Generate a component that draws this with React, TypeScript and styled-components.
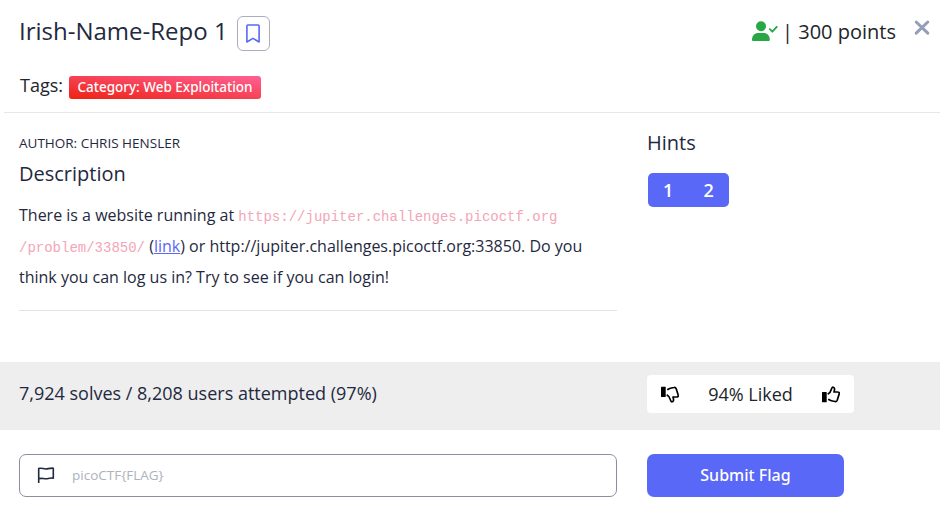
import React from 'react';
import styled, { createGlobalStyle } from 'styled-components';

const GlobalStyle = createGlobalStyle`
  * { box-sizing: border-box; }
  body {
    margin: 0;
    background: #fff;
    color: #1f2940;
    font-family: "Open Sans", "Noto Sans", sans-serif;
  }
`;

const Page = styled.main`
  width: 940px;
  height: 509px;
  overflow: hidden;
  display: flex;
  flex-direction: column;
`;

const Header = styled.header`
  height: 113px;
  margin-left: 4px;
  padding: 16px 10px 0 15px;
  border-bottom: 1px solid #e4e7eb;
`;

const TitleRow = styled.div`
  display: flex;
  height: 35px;
  align-items: flex-start;
`;

const Title = styled.h1`
  margin: 0;
  font-size: 24px;
  line-height: 30px;
  font-weight: 400;
`;

const BookmarkButton = styled.button`
  display: flex;
  align-items: center;
  justify-content: center;
  width: 33px;
  height: 35px;
  margin-left: 9px;
  padding: 0;
  border: 1px solid #a9b0bb;
  border-radius: 6px;
  background: #fff;
`;

const Points = styled.div`
  display: flex;
  margin-left: auto;
  color: #212529;
  font-size: 20px;
  line-height: 32px;
  white-space: pre;
`;

const UserIcon = styled.svg`
  margin: 4px 4px 0 0;
`;

const CloseButton = styled.button`
  display: flex;
  margin: 3px 0 0 18px;
  padding: 0;
  border: 0;
  background: none;
`;

const Tags = styled.div`
  display: flex;
  margin-top: 22px;
  padding-left: 1px;
  color: #212529;
  font-size: 18px;
  line-height: 24px;
`;

const Badge = styled.span`
  width: 192px;
  height: 23px;
  margin: 3px 0 0 6px;
  border-radius: 3px;
  background: linear-gradient(to top right, #ee2213, #ff6196);
  color: #fff;
  text-align: center;
  font-family: "Noto Sans", sans-serif;
  font-size: 13.5px;
  line-height: 22px;
  font-weight: 500;
  white-space: nowrap;
`;

const Columns = styled.div`
  display: grid;
  grid-template-columns: 598px 1fr;
  column-gap: 30px;
  padding-left: 19px;
`;

const Details = styled(Columns)`
  height: 249px;
`;

const Description = styled.section`
  height: 198px;
  padding-top: 20px;
  border-bottom: 1px solid #e2e2e3;
`;

const Author = styled.div`
  font-size: 13.5px;
  line-height: 20px;
`;

const Heading = styled.h2`
  margin: 0;
  font-size: 20px;
  line-height: 24px;
  font-weight: 400;
`;

const DescriptionHeading = styled(Heading)`
  margin-top: 9px;
`;

const Text = styled.p`
  margin: 14px 0 0;
  font-size: 16px;
  line-height: 31px;
  white-space: nowrap;
`;

const Code = styled.code`
  color: #f3a6b7;
  font-family: "Liberation Mono", monospace;
  font-size: 14px;
  line-height: 1;
`;

const Link = styled.a`
  color: #5868f6;
  text-decoration: underline;
`;

const Hints = styled.aside`
  padding-top: 18px;
`;

const HintGroup = styled.div`
  display: flex;
  width: 81px;
  height: 34px;
  margin: 18px 0 0 1px;
  border-radius: 5px;
  overflow: hidden;
`;

const HintButton = styled.button`
  flex: 1;
  padding: 0;
  border: 0;
  background: #5968f6;
  color: #fff;
  font: 560 18px/34px "Open Sans", sans-serif;
`;

const Stats = styled(Columns)`
  height: 68px;
  background: #eee;
`;

const Solves = styled.div`
  font-size: 18px;
  line-height: 62px;
`;

const Rating = styled.div`
  display: flex;
  align-items: center;
  justify-content: space-between;
  width: 207px;
  height: 38px;
  margin-top: 13px;
  padding: 0 14px;
  border-radius: 4px;
  background: #fff;
  color: #212529;
  font-size: 18px;
`;

const Submission = styled(Columns)`
  padding-top: 24px;
`;

const FlagField = styled.label`
  display: flex;
  align-items: center;
  height: 43px;
  padding: 0 0 1px 17px;
  border: 1px solid #8c8e9e;
  border-radius: 7px;
`;

const FlagInput = styled.input`
  flex: 1;
  margin-left: 17px;
  padding: 0;
  border: 0;
  outline: 0;
  background: transparent;
  font: 400 13.5px/20px "Open Sans", sans-serif;
  &::placeholder { color: #adb2bc; opacity: 1; }
`;

const SubmitButton = styled.button`
  width: 197px;
  height: 43px;
  padding: 0 0 2px;
  border: 0;
  border-radius: 7px;
  background: #5968f6;
  color: #fff;
  font: 500 16px/40px "Noto Sans", sans-serif;
`;

const Bookmark = () => (
  <svg width="14" height="19" viewBox="0 0 14 19" fill="none" stroke="#5968f6" strokeWidth="1.6" strokeLinejoin="round">
    <path d="M.9 2q0-1 1-1h10.2q1 0 1 1v16L7 14.4.9 18z" />
  </svg>
);

const UserCheck = () => (
  <UserIcon width="26" height="22" viewBox="0 0 26 22" fill="#28a745">
    <circle cx="9" cy="6.2" r="5" />
    <path d="M0 19.7C0 15.5 2.8 13 6.2 13h5.4c3.4 0 6.2 2.5 6.2 6.7 0 .8-.5 1.3-1.3 1.3H1.3C.5 21 0 20.5 0 19.7z" />
    <path d="M17.8 9.2l2.5 2.5 4.5-4.9" fill="none" stroke="#28a745" strokeWidth="1.8" strokeLinecap="round" strokeLinejoin="round" />
  </UserIcon>
);

const Thumb = ({ down = false }: { down?: boolean }) => (
  <svg width="18" height="17" viewBox="0 0 18 17">
    <g transform={down ? 'translate(0 17) scale(1 -1)' : undefined}>
      <rect x="0" y="6" width="4.7" height="10.3" rx=".6" />
      <path d="M5.7 8.2c2-1.1 3.2-2.8 3.8-5.2C9.9 1.6 10.5 1 11.2 1.2c1.5.4 1.7 1.9.8 4.8h3.4c1.6 0 2.2.9 1.7 2.2l-1.9 6c-.4 1-1.1 1.5-2.2 1.3-3-.3-4.5-.8-6.8-2.3" fill="none" stroke="#000" strokeWidth="1.7" strokeLinejoin="round" />
    </g>
  </svg>
);

const FlagIcon = () => (
  <svg width="18" height="18" viewBox="0 0 18 18" fill="none" stroke="#1f2940" strokeWidth="1.6" strokeLinejoin="round">
    <path d="M1.7 17V1.8M1.7 2.5c3.2-1 5 .9 8 .4 2.4-.4 4-.9 6.6-.7v10c-2.4-.5-4.2.1-6.6.5-3 .4-4.8-1-8 .1" />
  </svg>
);

const Close = () => (
  <svg width="16" height="17" viewBox="0 0 16 17" stroke="#959db9" strokeWidth="3" strokeLinecap="round">
    <path d="M2.2 3L13.8 14.2M13.8 3L2.2 14.2" />
  </svg>
);

export default function App() {
  return (
    <Page>
      <GlobalStyle />
      <Header>
        <TitleRow>
          <Title>Irish-Name-Repo 1</Title>
          <BookmarkButton aria-label="Bookmark"><Bookmark /></BookmarkButton>
          <Points><UserCheck />| 300 points</Points>
          <CloseButton aria-label="Close"><Close /></CloseButton>
        </TitleRow>
        <Tags>Tags: <Badge>Category: Web Exploitation</Badge></Tags>
      </Header>
      <Details>
        <Description>
          <Author>AUTHOR: CHRIS HENSLER</Author>
          <DescriptionHeading>Description</DescriptionHeading>
          <Text>
            There is a website running at <Code>https://jupiter.challenges.picoctf.org<br />/problem/33850/</Code> (<Link href="#">link</Link>) or http://jupiter.challenges.picoctf.org:33850. Do you<br />
            think you can log us in? Try to see if you can login!
          </Text>
        </Description>
        <Hints>
          <Heading>Hints</Heading>
          <HintGroup><HintButton>1</HintButton><HintButton>2</HintButton></HintGroup>
        </Hints>
      </Details>
      <Stats>
        <Solves>7,924 solves / 8,208 users attempted (97%)</Solves>
        <Rating><Thumb down /><span>94% Liked</span><Thumb /></Rating>
      </Stats>
      <Submission>
        <FlagField><FlagIcon /><FlagInput placeholder="picoCTF{FLAG}" /></FlagField>
        <SubmitButton>Submit Flag</SubmitButton>
      </Submission>
    </Page>
  );
}
